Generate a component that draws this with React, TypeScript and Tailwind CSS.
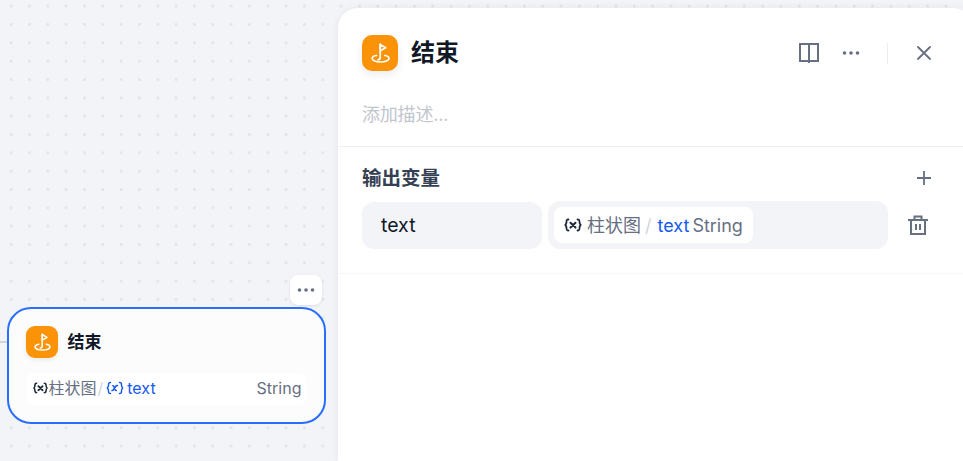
const FlagIcon = ({ size }: { size: number }) => (
  <svg width={size} height={size} viewBox="0 0 32 32" fill="none" stroke="white" strokeWidth="1.500" strokeLinecap="round" strokeLinejoin="round">
    <path d="M16.200 8v12c0 1.300-.7 2-2 2" />
    <path d="M16.200 8.500l4.800 2.800-4.800 2.800z" />
    <path d="M12.800 18.200c-2.300.4-3.800 1.300-3.800 2.600 0 1.800 3.300 3.200 7.500 3.200s7.500-1.400 7.500-3.200c0-1.300-1.500-2.200-3.800-2.600" />
  </svg>
);

const VarIcon = ({ className }: { className: string }) => (
  <svg className={className} width="18" height="14" viewBox="0 0 18 14" fill="none" stroke="currentColor" strokeWidth="1.800" strokeLinecap="round" strokeLinejoin="round">
    <path d="M4.500 1.500c-2 0-2 .8-2 2.500s-.3 2.200-1.200 3c.9.800 1.200 1.300 1.200 3s0 2.500 2 2.500" />
    <path d="M13.500 1.500c2 0 2 .8 2 2.500s.3 2.200 1.200 3c-.9.800-1.200 1.300-1.200 3s0 2.500-2 2.500" />
    <path d="M6.500 4.800l5 4.800M11.500 4.800l-5 4.800" strokeWidth="2.100" />
  </svg>
);

const Dots = ({ className }: { className: string }) => (
  <svg className={className} width="18" height="4" viewBox="0 0 18 4" fill="currentColor">
    <circle cx="2.500" cy="2" r="1.800" />
    <circle cx="9" cy="2" r="1.800" />
    <circle cx="15.500" cy="2" r="1.800" />
  </svg>
);

export default function App() {
  return (
    <div className="relative h-[461px] w-[963px] overflow-hidden bg-[#f2f4f7] bg-[radial-gradient(circle,#e2e4e9_1.300px,transparent_1.500px)] bg-[length:18.33px_18.33px] bg-[position:2px_-3px] font-['Inter','Noto_Sans_CJK_SC',sans-serif]">
      <div className="absolute left-0 top-[341px] h-[2px] w-[9px] bg-[#d0d5dc]" />

      <div className="absolute left-[290px] top-[275px] flex h-[30px] w-[32px] items-center justify-center rounded-lg bg-white shadow-[0_1px_3px_rgba(16,24,40,0.1)]">
        <Dots className="text-[#676f83]" />
      </div>

      <div className="absolute left-[7px] top-[307px] flex h-[117px] w-[319px] flex-col rounded-[24px] border-[2.5px] border-[#296dff] bg-[#fcfcfd] pl-[16.5px] pt-[17px]">
        <div className="flex items-center gap-[10px]">
          <div className="flex h-[32px] w-[32px] items-center justify-center rounded-[9px] bg-[#fb9308] shadow-[0_2px_4px_rgba(16,24,40,0.08)]">
            <FlagIcon size={32} />
          </div>
          <span className="text-[17px] font-bold leading-[24px] text-[#101828]">结束</span>
        </div>
        <div className="mt-[15px] flex h-[32px] w-[280px] items-center rounded-lg bg-white pb-[2px] pl-[6px] pr-[4px] text-[16px]">
          <VarIcon className="h-[12px] w-[17px] text-[#1d2939]" />
          <span className="text-[#676f83]">柱状图</span>
          <span className="ml-px text-[#d0d5dc]">/</span>
          <svg className="ml-[3px] text-[#155aef]" width="18" height="14" viewBox="0 0 18 14" fill="none" stroke="currentColor" strokeWidth="1.500" strokeLinecap="round" strokeLinejoin="round">
            <path d="M4.500 1.500c-2 0-2 .8-2 2.500s-.3 2.200-1.200 3c.9.800 1.200 1.300 1.200 3s0 2.500 2 2.500" />
            <path d="M13.500 1.500c2 0 2 .8 2 2.500s.3 2.200 1.200 3c-.9.800-1.200 1.300-1.200 3s0 2.500-2 2.500" />
            <path d="M6 9.500l1-.2 3.200-4.500 1.300-.2M6.800 4.800l.8.200 1.800 4.300.9.200" />
          </svg>
          <span className="ml-[3px] text-[#155aef]">text</span>
          <span className="ml-auto text-[#676f83]">String</span>
        </div>
      </div>

      <div className="absolute bottom-0 left-[338px] right-[-10px] top-[8px] rounded-t-[20px] bg-white shadow-[0_0_8px_rgba(16,24,40,0.06)]">
        <div className="flex h-[139px] flex-col border-b border-[#eff0f3] pl-[24px] pr-[42px]">
          <div className="mt-[27px] flex h-[36px] items-center">
            <div className="flex h-[36px] w-[36px] items-center justify-center rounded-[10px] bg-[#fb9308] shadow-[0_4px_8px_rgba(16,24,40,0.08)]">
              <FlagIcon size={36} />
            </div>
            <span className="ml-[13px] text-[24px] font-bold leading-[36px] text-[#101828]">结束</span>
            <div className="ml-auto flex items-center">
              <svg width="22" height="22" viewBox="0 0 22 22" fill="none" stroke="#676f83" strokeWidth="2" className="mr-[22px]">
                <path d="M2 2h18v17H2z" />
                <path d="M11 2v19" />
              </svg>
              <Dots className="mr-[27px] text-[#676f83]" />
              <div className="mr-[29px] h-[21px] w-px bg-[#eaecf0]" />
              <svg width="14" height="14" viewBox="0 0 14 14" fill="none" stroke="#676f83" strokeWidth="1.800" strokeLinecap="round">
                <path d="M1 1l12 12M13 1L1 13" />
              </svg>
            </div>
          </div>
          <p className="mt-[30px] text-[18px] leading-[28px] tracking-[-0.2px] text-[#c1c5cd]">添加描述...</p>
        </div>

        <div className="flex h-[127px] flex-col border-b border-[#f5f6f8] pl-[24px] pr-[42px]">
          <div className="mt-[18px] flex h-[26px] items-center justify-between">
            <span className="text-[19.5px] font-bold leading-[26px] text-[#354052]">输出变量</span>
            <svg width="14" height="14" viewBox="0 0 14 14" fill="none" stroke="#676f83" strokeWidth="1.800" className="-mt-px">
              <path d="M7 0v14M0 7h14" />
            </svg>
          </div>
          <div className="mt-[10px] flex items-center">
            <div className="flex h-[47px] w-[180px] items-center rounded-xl bg-[#f2f4f7] px-[19px] pt-[1px] text-[19.5px] text-[#101828]">text</div>
            <div className="ml-[6px] flex h-[48px] w-[340px] items-center rounded-xl bg-[#f2f4f7] pl-[6px]">
              <div className="flex h-[36px] w-[199px] items-center rounded-lg bg-white pl-[10px] text-[18px]">
                <VarIcon className="text-[#1d2939]" />
                <span className="ml-[5px] text-[#676f83]">柱状图</span>
                <span className="ml-[4px] text-[#d0d5dc]">/</span>
                <span className="ml-[6px] text-[#155aef]">text</span>
                <span className="ml-[3px] text-[#676f83]">String</span>
              </div>
            </div>
            <svg width="20" height="20" viewBox="0 0 20 20" fill="none" stroke="#676f83" strokeWidth="2" className="ml-[20px]">
              <path d="M0 5h20M6.500 5V1.500h7V5M3 5v14h14V5M8 9v6M12 9v6" />
            </svg>
          </div>
        </div>
      </div>
    </div>
  );
}
